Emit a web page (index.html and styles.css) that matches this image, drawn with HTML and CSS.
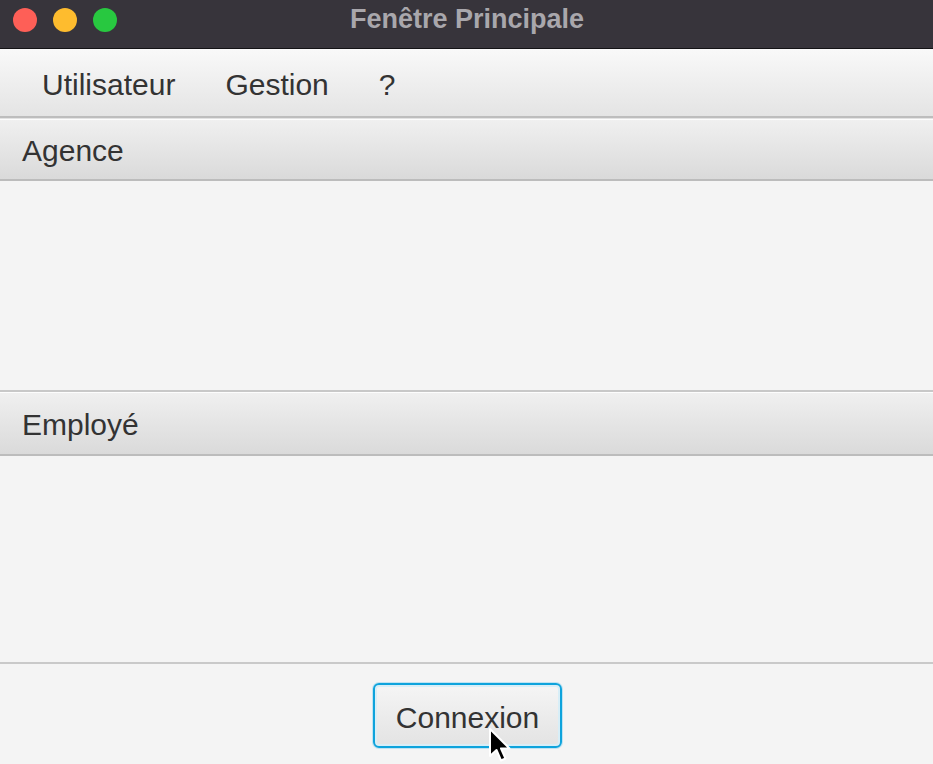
FILE: index.html
```html
<!DOCTYPE html>
<html lang="fr">
<head>
<meta charset="utf-8">
<title>Fenêtre Principale</title>
<link rel="stylesheet" href="styles.css">
</head>
<body>
<div class="window">
  <div class="titlebar">
    <div class="lights">
      <span class="light red"></span>
      <span class="light yellow"></span>
      <span class="light green"></span>
    </div>
    <div class="title">Fenêtre Principale</div>
  </div>
  <div class="menubar">
    <span class="menu-item">Utilisateur</span>
    <span class="menu-item">Gestion</span>
    <span class="menu-item">?</span>
  </div>
  <div class="pane first">
    <div class="pane-title">Agence</div>
    <div class="pane-content"></div>
  </div>
  <div class="pane second">
    <div class="pane-title">Employé</div>
    <div class="pane-content"></div>
  </div>
  <div class="footer">
    <div class="btn-wrap">
      <button class="btn">Connexion</button>
      <svg class="cursor" width="26" height="36" viewBox="0 0 26 36">
        <path d="M2 2 L2 29 L8.5 23 L13 33.5 L17.5 31.5 L13 21.5 L21.5 21.5 Z" fill="#000" stroke="#fff" stroke-width="2" stroke-linejoin="round"/>
      </svg>
    </div>
  </div>
</div>
</body>
</html>
```

FILE: styles.css
```css
* { box-sizing: border-box; }
html, body {
  margin: 0;
  padding: 0;
  width: 933px;
  height: 764px;
  overflow: hidden;
  background: #f4f4f4;
  font-family: "Liberation Sans", Arial, sans-serif;
}
.window {
  width: 933px;
  height: 764px;
  display: flex;
  flex-direction: column;
  background: #f4f4f4;
}
.titlebar {
  height: 49px;
  flex: none;
  background: #37343b;
  border-bottom: 1px solid #141316;
  position: relative;
  display: flex;
  align-items: center;
  justify-content: center;
}
.lights {
  position: absolute;
  left: 13px;
  top: 8px;
  display: flex;
  gap: 16px;
}
.light {
  width: 24px;
  height: 24px;
  border-radius: 50%;
  display: block;
}
.red { background: #fe5f57; }
.yellow { background: #febc2e; }
.green { background: #28c840; }
.title {
  color: #a9a7ac;
  font-weight: bold;
  font-size: 27px;
  margin-top: -9px;
  margin-left: 1px;
}
.menubar {
  height: 69px;
  flex: none;
  display: flex;
  align-items: center;
  padding: 4px 0 0 17px;
  background: linear-gradient(#f9f9f9, #e4e4e4);
  border-bottom: 2px solid #bdbdbd;
}
.menu-item {
  padding: 0 25px;
  font-size: 30px;
  color: #333;
}
.pane {
  display: flex;
  flex-direction: column;
  flex: none;
}
.pane-title {
  height: 63px;
  display: flex;
  align-items: center;
  padding-left: 22px;
  padding-top: 4px;
  font-size: 30px;
  color: #333;
  background: linear-gradient(#f0f0f0, #dadada);
  box-shadow: inset 0 1px 0 #fdfdfd;
  border-bottom: 2px solid #bcbcbc;
}
.first .pane-title {
  border-top: 1px solid #e2e2e2;
}
.second .pane-title {
  border-top: 2px solid #c8c8c8;
  height: 66px;
}
.first .pane-content { height: 209px; background: #f4f4f4; }
.second .pane-content { height: 206px; background: #f4f4f4; }
.footer {
  flex: 1;
  border-top: 2px solid #c9c9c9;
  display: flex;
  justify-content: center;
  padding-top: 19px;
}
.btn-wrap {
  position: relative;
  margin-left: 2px;
}
.btn {
  width: 189px;
  height: 65px;
  font-family: "Liberation Sans", Arial, sans-serif;
  font-size: 30px;
  color: #333;
  border: 2px solid #0ea3dc;
  border-radius: 6px;
  background: linear-gradient(#f5f5f5, #e3e3e3);
  box-shadow: inset 0 0 0 2px #d8eef7, 0 0 0 1px #bfe3f2;
  padding: 4px 0 0 0;
}
.cursor {
  position: absolute;
  left: 115px;
  top: 44px;
}
```
